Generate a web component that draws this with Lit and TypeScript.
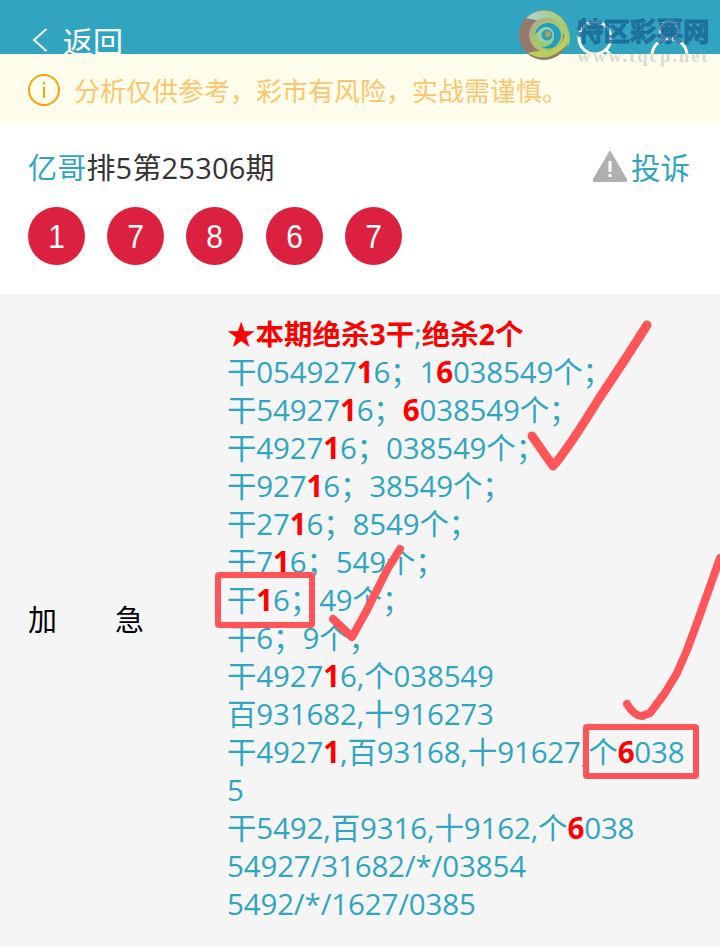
import { LitElement, html, css, svg, TemplateResult } from 'lit';
import { customElement } from 'lit/decorators.js';

// text lines of the post, {x} marks a red bold digit
const POST = [
	'干054927{1}6；1{6}038549个；',
	'干54927{1}6；{6}038549个；',
	'干4927{1}6；038549个；',
	'干927{1}6；38549个；',
	'干27{1}6；8549个；',
	'干7{1}6；549个；',
	'干{1}6；49个；',
	'干6；9个；',
	'干4927{1}6,个038549',
	'百931682,十916273',
	'干4927{1},百93168,十91627,个{6}038',
	'5',
	'干5492,百9316,十9162,个{6}038',
	'54927/31682/*/03854',
	'5492/*/1627/0385',
];

const BALLS = ['1', '7', '8', '6', '7'];

function renderLine(line: string): TemplateResult {
	const parts = line.split(/\{(.)\}/);
	return html`<div>${parts.map((p, i) => (i % 2 ? html`<b>${p}</b>` : p))}</div>`;
}

@customElement('app-root')
export class AppRoot extends LitElement {
	protected render(): TemplateResult {
		return html`
			<header class="bar">
				<svg class="back" viewBox="0 0 16 24" width="16" height="24">
					<path d="M14.5 1 L2 12 L14.5 23" fill="none" stroke="#fff" stroke-width="2" />
				</svg>
				<span class="bar-title">返回</span>
				<span class="bar-space"></span>
				<svg class="bar-icons" viewBox="0 0 130 54" width="130" height="54">
					<circle cx="35" cy="38" r="16" fill="none" stroke="#fff" stroke-width="3" />
					<path d="M46 50 L52 56" fill="none" stroke="#fff" stroke-width="3" />
					<circle cx="109" cy="30" r="9" fill="none" stroke="#fff" stroke-width="2.5" />
					<path d="M92 56 C92 33 127 33 127 56" fill="none" stroke="#fff" stroke-width="3" />
				</svg>
			</header>

			<div class="notice">
				<svg viewBox="0 0 32 32" width="32" height="32">
					<circle cx="16" cy="16" r="15" fill="none" stroke="#ff9f0a" stroke-width="2" />
					<rect x="15" y="13" width="2" height="11" fill="#ff9f0a" />
					<rect x="15" y="8" width="2" height="2.5" fill="#ff9f0a" />
				</svg>
				<span>分析仅供参考，彩市有风险，实战需谨慎。</span>
			</div>

			<section class="head">
				<div class="title-row">
					<div class="title"><span class="teal">亿哥</span>排5第25306期</div>
					<div class="report">
						<svg viewBox="0 0 36 32" width="36" height="32">
							<path d="M18 1 L35 30 Q35 31.500 33 31.500 L3 31.500 Q1 31.500 1 30 Z" fill="#b0b0b0" stroke="#b0b0b0" stroke-linejoin="round" />
							<rect x="16.500" y="11" width="3" height="11" fill="#fff" />
							<rect x="16.500" y="24" width="3" height="3" fill="#fff" />
						</svg>
						<span class="teal">投诉</span>
					</div>
				</div>
				<div class="balls">
					${BALLS.map((b) => html`<span class="ball"><span>${b}</span></span>`)}
				</div>
			</section>

			<section class="post">
				<div class="label"><span>加</span><span>急</span></div>
				<div class="lines">
					<div class="lead">★本期绝杀3干<i>;</i>绝杀2个</div>
					${POST.map(renderLine)}
				</div>
			</section>

			${this.renderMarks()}
			${this.renderWatermark()}
		`;
	}

	// hand drawn ticks and boxes lying over the text
	private renderMarks(): TemplateResult {
		return html`<svg class="marks" viewBox="0 0 720 947" width="720" height="947">
			${svg`
				<g fill="none" stroke="#ff5558" stroke-linecap="round" stroke-linejoin="round">
					<path stroke-width="9" d="M532 436 L553 466 Q566 452 600 397 Q625 360 647 325" />
					<path stroke-width="8" d="M333 619 L352 637 L367 610 L387 570 L400 549" />
					<path stroke-width="8" d="M627 704 Q634 716 642 716 L650 713 L665 693 L677 673 L687 650 L697 623 L720 558" />
					<rect x="218" y="575" width="94" height="50" rx="1" stroke-width="6" />
					<rect x="586" y="727" width="110" height="49" rx="1" stroke-width="6" />
				</g>
			`}
		</svg>`;
	}

	private renderWatermark(): TemplateResult {
		return html`<div class="mark">
			<svg viewBox="0 0 52 52" width="52" height="52">
				<defs>
					<linearGradient id="wm-a" x1="0" y1="0" x2="1" y2="0">
						<stop offset="0" stop-color="#a9d4d6" />
						<stop offset="1" stop-color="#a5cc62" />
					</linearGradient>
					<linearGradient id="wm-b" x1="0" y1="0" x2="1" y2="1">
						<stop offset="0" stop-color="#a3aa92" />
						<stop offset="1" stop-color="#c4d25c" />
					</linearGradient>
				</defs>
				<circle cx="26" cy="26" r="25" fill="#94786c" />
				<path d="M8 9 A25 25 0 0 1 50 20 A22 22 0 0 1 50 38 Q48 20 30 14 Q18 11 8 9 Z" fill="url(#wm-a)" />
				<path d="M10 44 Q30 56 49 36 Q50 30 47 26 Q42 42 24 42 Q15 42 10 44 Z" fill="#bccf5c" />
				<circle cx="28" cy="26" r="17" fill="url(#wm-b)" />
				<circle cx="30" cy="27" r="14.500" fill="#a3c96c" />
				<path d="M17 26 A13 13 0 1 1 43 28 Q38 44 23 38 Q33 38 36 30 Q36 22 28 20 Q20 20 17 26 Z" fill="#1f9ec6" />
				<circle cx="28" cy="26" r="8" fill="#9ccfa6" />
				<circle cx="29" cy="26" r="5.500" fill="#2a9fc0" />
				<circle cx="30" cy="25" r="3" fill="#b59f5a" />
			</svg>
			<div class="mark-text">
				<div class="mark-cn">特区彩票网</div>
				<div class="mark-en">www.tqcp.net</div>
			</div>
		</div>`;
	}

	static styles = css`
		:host {
			display: block;
			position: relative;
			width: 720px;
			height: 947px;
			overflow: hidden;
			background: #f5f5f5;
			font-family: 'Open Sans', 'Noto Sans CJK SC', sans-serif;
		}

		* {
			box-sizing: border-box;
		}

		.teal {
			color: #31a5bf;
		}

		.bar {
			display: flex;
			height: 54px;
			overflow: hidden;
			background: #31a5bf;
			color: #fff;
			padding-left: 32px;
		}

		.back {
			margin-top: 28px;
		}

		.bar-title {
			margin-left: 15px;
			font-size: 30px;
			line-height: 40px;
			margin-top: 22px;
			height: 40px;
			white-space: nowrap;
		}

		.bar-space {
			flex: 1;
		}

		.bar-icons {
			margin-right: 30px;
			flex: none;
		}

		.notice {
			display: flex;
			align-items: center;
			gap: 14px;
			height: 72px;
			padding-left: 28px;
			background: #fffdeb;
			color: #fdc56f;
			font-size: 26px;
		}

		.head {
			height: 168px;
			background: #fff;
			padding: 20px 30px 0 28px;
		}

		.title-row {
			display: flex;
			justify-content: space-between;
			align-items: center;
			height: 40px;
		}

		.title {
			font-size: 29px;
			letter-spacing: 0.200px;
			color: #333;
		}

		.report {
			display: flex;
			align-items: center;
			gap: 3px;
			font-size: 29.500px;
		}

		.balls {
			display: flex;
			gap: 22.200px;
			margin-top: 21px;
		}

		.ball {
			display: flex;
			align-items: center;
			justify-content: center;
			width: 57px;
			height: 58px;
			border-radius: 50%;
			background: #dc2140;
			color: #fff;
			font-family: 'Liberation Sans', sans-serif;
			font-size: 34px;
		}

		.ball span {
			display: inline-block;
			transform: scaleX(0.88);
		}

		.post {
			display: grid;
			grid-template-columns: 199px 1fr;
			align-items: center;
			padding: 21px 20px 24px 28px;
		}

		.label {
			display: flex;
			gap: 58px;
			font-size: 29px;
			color: #000;
			margin-top: -2px;
		}

		.lines {
			font-size: 29.500px;
			letter-spacing: -0.150px;
			line-height: 38px;
			color: #31a5bf;
			white-space: nowrap;
		}

		.lines b {
			color: #f00;
			font-weight: 700;
		}

		.lead {
			color: #f00;
			font-weight: 700;
			font-size: 28.500px;
			letter-spacing: 0;
		}

		.lead i {
			font-style: normal;
			font-weight: 400;
			color: #31a5bf;
		}

		.marks {
			position: absolute;
			left: 0;
			top: 0;
			pointer-events: none;
		}

		.mark {
			position: absolute;
			left: 518px;
			top: 9px;
			display: flex;
			gap: 7px;
		}

		.mark-text {
			padding-top: 8px;
		}

		.mark-cn {
			font-size: 26.500px;
			line-height: 29px;
			font-weight: 700;
			-webkit-text-stroke: 1px rgba(25, 100, 150, 0.75);
			color: rgba(25, 100, 150, 0.75);
			white-space: nowrap;
		}

		.mark-en {
			font-family: 'Liberation Serif', serif;
			font-size: 19px;
			line-height: 20px;
			font-weight: 700;
			letter-spacing: 1.800px;
			color: rgba(150, 150, 150, 0.35);
			white-space: nowrap;
		}
	`;
}
